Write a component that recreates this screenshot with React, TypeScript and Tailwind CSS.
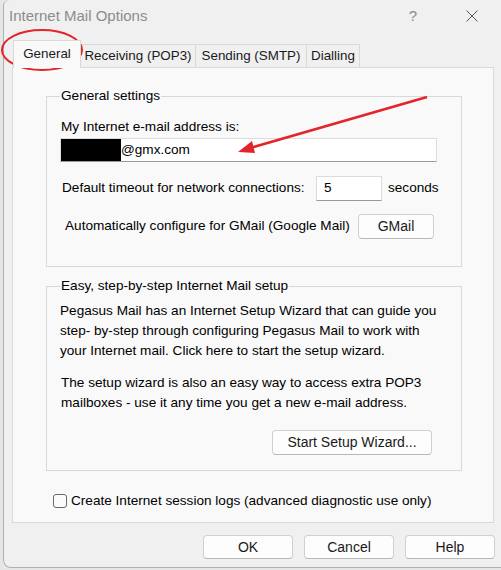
const font = { fontFamily: '"Liberation Sans", Arial, sans-serif' };

const Btn = ({ label, className }: { label: string; className: string }) => (
  <div
    className={`flex items-center justify-center rounded-[4px] border border-[#d0d0d0] border-b-[#b8b8b8] bg-[#fdfdfd] text-[14px] text-[#1a1a1a] ${className}`}
  >
    {label}
  </div>
);

const tabs = [
  { label: "Receiving (POP3)", w: "w-[116px]" },
  { label: "Sending (SMTP)", w: "w-[112px]" },
  { label: "Dialling", w: "w-[54px]" },
];

export default function App() {
  return (
    <div className="relative w-[501px] h-[570px] overflow-hidden bg-[#e6e6e6]" style={font}>
      <div className="ml-[3px] w-[498px] h-[568px] flex flex-col bg-[#f0f0f0] border-l border-b border-[#b0b0b0] rounded-bl-[8px] rounded-tl-[6px]">
        {/* title bar */}
        <div className="h-[32px] flex items-center shrink-0">
          <span className="pl-[5px] text-[15px] text-[#8c8c8c]">Internet Mail Options</span>
          <span className="ml-auto mr-[49px] text-[15px] text-[#8c8c8c]">?</span>
          <svg width="12" height="12" viewBox="0 0 12 12" className="mr-[23px]">
            <path d="M0.5 0.5 L11.5 11.5 M11.5 0.5 L0.5 11.5" stroke="#555" strokeWidth="1" />
          </svg>
        </div>

        {/* tabs */}
        <div className="mt-[8px] ml-[9px] h-[27px] flex items-end shrink-0 text-[13.4px] text-[#1a1a1a]">
          <div className="relative z-10 -mb-px w-[68px] h-[28px] pt-[3px] flex justify-center bg-[#f9f9f9] border border-b-0 border-[#d9d9d9]">
            General
          </div>
          {tabs.map((t) => (
            <div
              key={t.label}
              className={`${t.w} h-[23px] -ml-px first:ml-0 flex items-center justify-center bg-[#f0f0f0] border border-b-0 border-[#d9d9d9]`}
            >
              {t.label}
            </div>
          ))}
        </div>

        {/* panel */}
        <div className="ml-[8px] w-[482px] h-[456px] shrink-0 border border-[#dadada] bg-[#f9f9f9] pl-[33px] pt-[28px] text-[13.6px] text-black">
          <div className="w-[416px] h-[171px] border border-[#d8d8d8] pl-[13px]">
            <span className="block w-fit -mt-[10px] px-[1px] leading-[18px] bg-[#f9f9f9]">General settings</span>
            <div className="mt-[13px] pl-px leading-[18px]">My Internet e-mail address is:</div>
            <div className="mt-[2px] w-[377px] h-[24px] flex items-center bg-white border border-[#dcdcdc] border-b-[#9a9a9a]">
              <span className="w-[60px] h-[22px] bg-black" />
              <span>@gmx.com</span>
            </div>
            <div className="mt-[14px] flex items-center h-[25px]">
              <span className="w-[256px] pl-[2px]">Default timeout for network connections:</span>
              <div className="w-[66px] h-[25px] flex items-center pl-[7px] bg-white border border-[#dcdcdc] border-b-[#9a9a9a]">5</div>
              <span className="ml-[6px]">seconds</span>
            </div>
            <div className="mt-[13px] flex items-center h-[25px]">
              <span className="w-[298px] pl-[5px]">Automatically configure for GMail (Google Mail)</span>
              <Btn label="GMail" className="w-[76px] h-[25px] text-[13.6px]" />
            </div>
          </div>

          <div className="mt-[19px] w-[416px] h-[185px] border border-[#d8d8d8] pl-[13px]">
            <span className="block w-fit -mt-[10px] px-[1px] leading-[18px] bg-[#f9f9f9]">Easy, step-by-step Internet Mail setup</span>
            <p className="mt-[6px] leading-[20px]">
              Pegasus Mail has an Internet Setup Wizard that can guide you
              <br />
              step- by-step through configuring Pegasus Mail to work with
              <br />
              your Internet mail. Click here to start the setup wizard.
            </p>
            <p className="mt-[12px] pl-px leading-[20px]">
              The setup wizard is also an easy way to access extra POP3
              <br />
              mailboxes - use it any time you get a new e-mail address.
            </p>
            <Btn label="Start Setup Wizard..." className="mt-[17px] ml-[212px] w-[160px] h-[25px]" />
          </div>

          <div className="mt-[20px] ml-[7px] flex items-center gap-[4px]">
            <span className="w-[14px] h-[14px] rounded-[3px] border border-[#6a6a6a] bg-[#fbfbfb]" />
            <span>Create Internet session logs (advanced diagnostic use only)</span>
          </div>
        </div>

        {/* bottom buttons */}
        <div className="mt-[12px] flex justify-end gap-[11px] pr-[6px]">
          <Btn label="OK" className="w-[90px] h-[24px]" />
          <Btn label="Cancel" className="w-[90px] h-[24px]" />
          <Btn label="Help" className="w-[90px] h-[24px]" />
        </div>
      </div>

      {/* red annotations */}
      <svg className="absolute left-0 top-0 pointer-events-none" width="501" height="570">
        <ellipse cx="42" cy="50" rx="40" ry="20" fill="none" stroke="#e3242b" strokeWidth="2" />
        <line x1="427" y1="97" x2="250" y2="148" stroke="#e3242b" strokeWidth="2.5" />
        <polygon points="238,152 255,153 252,141" fill="#e3242b" />
      </svg>
    </div>
  );
}
